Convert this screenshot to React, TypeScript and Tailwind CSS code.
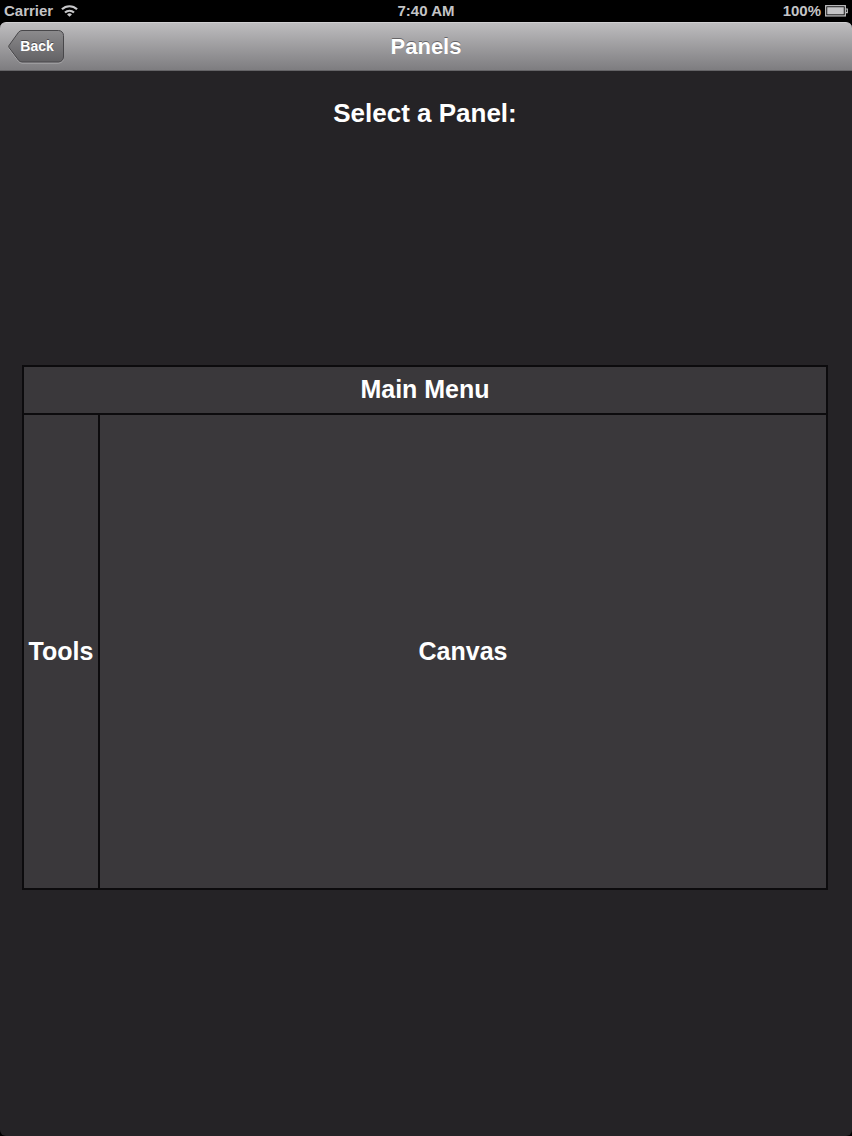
import React from 'react';

const WifiIcon: React.FC = () => (
  <svg className="w-[17px] h-[14px]" viewBox="0 0 18 14" fill="none" stroke="#c9c9cb" strokeWidth="2.3" aria-hidden="true">
    <path d="M1 5.2a11.5 11.5 0 0 1 16 0" />
    <path d="M4.2 8.6a7 7 0 0 1 9.6 0" />
    <path d="M9 13.2 6.4 10.7a3.8 3.8 0 0 1 5.2 0z" fill="#c9c9cb" stroke="none" />
  </svg>
);

const BatteryIcon: React.FC = () => (
  <svg className="w-[23px] h-3" viewBox="0 0 23 12" fill="none" aria-hidden="true">
    <rect x="0.7" y="0.7" width="19.6" height="10.2" stroke="#c0c0c2" strokeWidth="1.3" />
    <rect x="2.2" y="2.2" width="16.6" height="7.2" fill="#c4c4c6" />
    <path d="M21 4h1.3v3.6H21" stroke="#c0c0c2" strokeWidth="1.2" />
  </svg>
);

const StatusBar: React.FC = () => (
  <div className="grid grid-cols-3 items-center h-[22px] px-1 bg-black text-[15px] font-bold text-[#c4c4c6]">
    <div className="flex items-center gap-2">
      <span>Carrier</span>
      <WifiIcon />
    </div>
    <span className="text-center">7:40 AM</span>
    <div className="flex items-center justify-end gap-1">
      <span>100%</span>
      <BatteryIcon />
    </div>
  </div>
);

const BackButton: React.FC = () => (
  <button type="button" className="relative flex items-center justify-center w-14 h-[34px] pl-[2px] pb-[2px]">
    <svg className="absolute inset-0 w-full h-full" viewBox="0 0 56 34" aria-hidden="true">
      <defs>
        <linearGradient id="back-fill" x1="0" y1="0" x2="0" y2="1">
          <stop offset="0" stopColor="#8c8b8d" />
          <stop offset="1" stopColor="#626164" />
        </linearGradient>
      </defs>
      <path
        d="M14 1.5H50.5a5 5 0 0 1 5 5V28a5 5 0 0 1-5 5H14Q12 33 10.5 31.2L1 18.5Q0.3 17.5 1 16.5L10.5 3.3Q12 1.5 14 1.5z"
        fill="none"
        stroke="#b2b1b3"
      />
      <path
        d="M14 0.5H50.5a5 5 0 0 1 5 5V27a5 5 0 0 1-5 5H14Q12 32 10.5 30.2L1 17.5Q0.3 16.5 1 15.5L10.5 2.3Q12 0.5 14 0.5z"
        fill="url(#back-fill)"
        stroke="#48474a"
      />
    </svg>
    <span className="relative text-sm font-bold text-white [text-shadow:0_-1px_0_#4d4c4f]">Back</span>
  </button>
);

const NavBar: React.FC = () => (
  <header className="grid grid-cols-[1fr_auto_1fr] items-center h-[49px] px-2 rounded-t-md border-t border-t-[#d0cfd1] border-b border-b-[#656467] bg-linear-to-b from-[#bebdbf] to-[#7e7d80]">
    <BackButton />
    <h1 className="text-[22px] font-bold text-white [text-shadow:0_-1px_0_#666568]">Panels</h1>
  </header>
);

interface PanelButtonProps {
  label: string;
  className?: string;
}

const PanelButton: React.FC<PanelButtonProps> = ({ label, className }) => (
  <button
    type="button"
    className={`flex items-center justify-center pb-[2px] bg-[#3a383b] text-[25px] leading-7 font-bold text-white ${className ?? ''}`}
  >
    {label}
  </button>
);

const App: React.FC = () => {
  return (
    <div className="flex flex-col min-h-screen bg-black font-['Liberation_Sans',Arial,sans-serif]">
      <StatusBar />
      <NavBar />
      <main className="flex-1 pt-6 pl-[22px] pr-6 rounded-b-md bg-[#252326]">
        <h2 className="text-center text-[26px] leading-9 font-bold text-white">Select a Panel:</h2>
        <div className="grid grid-cols-[74px_1fr] grid-rows-[46px_1fr] gap-[2px] mt-[234px] border-2 border-[#0c0b0d] bg-[#0c0b0d] aspect-[806/525]">
          <PanelButton label="Main Menu" className="col-span-2" />
          <PanelButton label="Tools" />
          <PanelButton label="Canvas" />
        </div>
      </main>
    </div>
  );
};

export default App;
